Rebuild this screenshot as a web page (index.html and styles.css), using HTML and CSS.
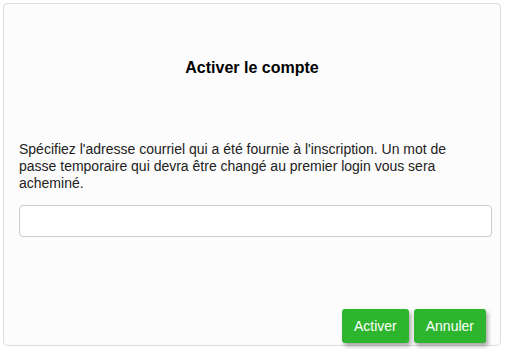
FILE: index.html
```html
<!DOCTYPE html>
<html lang="fr">
<head>
<meta charset="utf-8">
<link rel="stylesheet" href="styles.css">
</head>
<body>
<div class="panel">
  <h1 class="title">Activer le compte</h1>
  <p class="msg">Spécifiez l'adresse courriel qui a été fournie à l'inscription. Un mot de passe temporaire qui devra être changé au premier login vous sera acheminé.</p>
  <input class="field" type="text">
  <div class="actions">
    <button class="btn">Activer</button>
    <button class="btn">Annuler</button>
  </div>
</div>
</body>
</html>
```
FILE: styles.css
```css
html, body {
  margin: 0;
  padding: 0;
  background: #ffffff;
}
body {
  font-family: "Liberation Sans", Arial, sans-serif;
  color: #222;
}
.panel {
  box-sizing: border-box;
  margin: 3px;
  width: 498px;
  height: 343px;
  border: 1px solid #dcdcdc;
  border-radius: 4px;
  background: #fcfcfc;
  display: flex;
  flex-direction: column;
  padding: 0 8px 2px 15px;
}
.title {
  margin: 55px 0 0 -7px;
  font-size: 16px;
  line-height: 18px;
  font-weight: bold;
  color: #000;
  text-align: center;
}
.msg {
  margin: 64px 0 0 0;
  padding-right: 30px;
  font-size: 14px;
  line-height: 17px;
}
.field {
  box-sizing: border-box;
  margin-top: 13px;
  width: 100%;
  height: 32px;
  border: 1px solid #cccccc;
  border-radius: 4px;
  background: #fff;
  padding: 6px 12px;
  font: 14px "Liberation Sans", Arial, sans-serif;
}
.actions {
  margin-top: auto;
  display: flex;
  justify-content: flex-end;
  gap: 5px;
  padding-right: 6px;
}
.btn {
  height: 34px;
  padding: 0 12px;
  border: none;
  border-radius: 3px;
  background: #2eb52e;
  color: #fff;
  font: 14px "Liberation Sans", Arial, sans-serif;
  box-shadow: 2px 3px 4px rgba(0, 0, 0, 0.35);
}
```
